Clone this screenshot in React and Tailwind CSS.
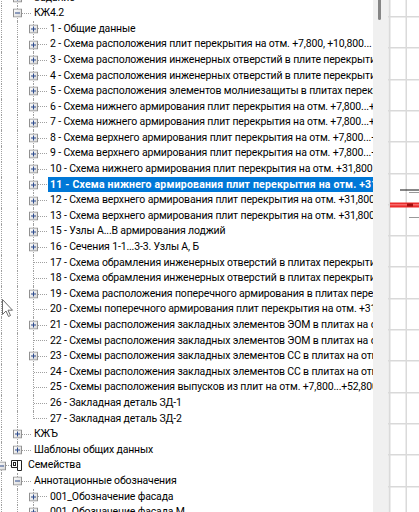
import React from "react";

const LINE = "border-[#a0a0a0]";

function ExpBox({ minus }) {
  return (
    <svg width="9" height="9" viewBox="0 0 9 9" className="block">
      <defs>
        <linearGradient id="bx" x1="0" y1="0" x2="1" y2="1">
          <stop offset="0" stopColor="#ffffff" />
          <stop offset="1" stopColor="#d6d6d6" />
        </linearGradient>
      </defs>
      <rect x="0.5" y="0.5" width="8" height="8" fill="url(#bx)" stroke="#919191" />
      <rect x="2" y="4" width="5" height="1" fill="#2c4a8c" />
      {!minus && <rect x="4" y="2" width="1" height="5" fill="#2c4a8c" />}
    </svg>
  );
}

function FamilyIcon() {
  return (
    <svg width="11" height="11" viewBox="0 0 11 11" className="block">
      <path d="M0.5 0.5 H10.5 V10.5 H6.5 V7.5 H0.5 Z" fill="#fff" stroke="#222" />
      <path d="M6.5 0.5 V7.5" stroke="#222" />
      <rect x="2.5" y="2.5" width="2" height="3" fill="#fff" stroke="#222" />
    </svg>
  );
}

function Guide({ on }) {
  return (
    <div className="w-[16px] self-stretch shrink-0 flex">
      {on && <div className={`ml-[8px] h-full border-l border-dotted ${LINE}`} />}
    </div>
  );
}

function Row({ text, box, next, icon, selected, guides }) {
  return (
    <div className="flex h-[15.6px] items-center whitespace-nowrap">
      {guides.map((g, i) => (
        <Guide key={i} on={g} />
      ))}
      <div className={`relative ${icon ? "w-[18px]" : "w-[23px]"} self-stretch shrink-0 flex items-center`}>
        <div className={`absolute left-[8px] top-0 ${next ? "bottom-0" : "h-1/2"} border-l border-dotted ${LINE}`} />
        <div className={`ml-[9px] flex-1 border-t border-dotted ${LINE} ${icon ? "mr-0" : "mr-[1px]"}`} />
        {box && (
          <div className="absolute left-[4px] top-1/2 -translate-y-1/2">
            <ExpBox minus={box === "minus"} />
          </div>
        )}
      </div>
      {icon && (
        <div className="shrink-0 mr-[4px]">
          <FamilyIcon />
        </div>
      )}
      <div
        className={`h-[15px] flex items-center px-[2px] ${
          selected ? "bg-[#0078d7] text-white font-bold tracking-[0.2px]" : "text-black"
        }`}
      >
        {text}
      </div>
    </div>
  );
}

const L2 = [
  ["1 - Общие данные", true],
  ["2 - Схема расположения плит перекрытия на отм. +7,800, +10,800...", true],
  ["3 - Схема расположения инженерных отверстий в плите перекрытия на отм.", true],
  ["4 - Схема расположения инженерных отверстий в плите перекрытия на отм.", true],
  ["5 - Схема расположения элементов молниезащиты в плитах перекрытия", true],
  ["6 - Схема нижнего армирования плит перекрытия на отм. +7,800...+28,800", true],
  ["7 - Схема нижнего армирования плит перекрытия на отм. +7,800...+28,800", true],
  ["8 - Схема верхнего армирования плит перекрытия на отм. +7,800...+28,800", true],
  ["9 - Схема верхнего армирования плит перекрытия на отм. +7,800...+28,800", true],
  ["10 - Схема нижнего армирования плит перекрытия на отм. +31,800...+52,800", true],
  ["11 - Схема нижнего армирования плит перекрытия на отм. +31,800", true, true],
  ["12 - Схема верхнего армирования плит перекрытия на отм. +31,800", true],
  ["13 - Схема верхнего армирования плит перекрытия на отм. +31,800", true],
  ["15 - Узлы А...В армирования лоджий", true],
  ["16 - Сечения 1-1...3-3. Узлы А, Б", true],
  ["17 - Схема обрамления инженерных отверстий в плитах перекрытия", false],
  ["18 - Схема обрамления инженерных отверстий в плитах перекрытия", false],
  ["19 - Схема расположения поперечного армирования в плитах перекрытия", true],
  ["20 - Схемы поперечного армирования плит перекрытия на отм. +31,800", false],
  ["21 - Схемы расположения закладных элементов ЭОМ в плитах на отм. +7,800", true],
  ["22 - Схемы расположения закладных элементов ЭОМ в плитах на отм. +31,800", false],
  ["23 - Схемы расположения закладных элементов СС в плитах на отм. +7,800", true],
  ["24 - Схемы расположения закладных элементов СС в плитах на отм. +7,800...+52,800", false],
  ["25 - Схемы расположения выпусков из плит на отм. +7,800...+52,800", false],
  ["26 - Закладная деталь ЗД-1", false],
  ["27 - Закладная деталь ЗД-2", false],
];

const rows = [
  { text: "Задание", box: "plus", next: true, guides: [true] },
  { text: "КЖ4.2", box: "minus", next: true, guides: [true] },
  ...L2.map(([t, b, s], i) => ({
    text: t,
    box: b ? "plus" : null,
    next: i < L2.length - 1,
    selected: !!s,
    guides: [true, true],
  })),
  { text: "КЖЪ", box: "plus", next: true, guides: [true] },
  { text: "Шаблоны общих данных", box: "plus", next: false, guides: [true] },
  { text: "Семейства", box: "minus", next: true, icon: true, guides: [] },
  { text: "Аннотационные обозначения", box: "minus", next: true, guides: [true] },
  { text: "001_Обозначение фасада", box: "plus", next: true, guides: [true, true] },
  { text: "001_Обозначение фасада М", box: "plus", next: true, guides: [true, true] },
];

function Drawing() {
  const hs = [];
  for (let i = 0; i < 17; i++) hs.push(17 + i * 31.3);
  return (
    <svg width="31" height="512" className="block">
      <rect width="31" height="512" fill="#fff" />
      {hs.map((y, i) => (
        <rect key={i} x="0" y={Math.round(y) - 1} width="31" height="1.5" fill="#d9d9d9" />
      ))}
      <rect x="0.5" y="0" width="2" height="512" fill="#dadada" />
      <rect x="17.5" y="0" width="1.5" height="512" fill="#dadada" />
      <rect x="12" y="189.5" width="19" height="1" fill="#111" />
      <rect x="21" y="192" width="10" height="1" fill="#9a9a9a" />
      <rect x="21" y="217" width="10" height="1" fill="#9a9a9a" />
      <rect x="2" y="202.5" width="29" height="5" fill="#ec2b2b" />
      <rect x="2" y="204" width="29" height="1.5" fill="#f56a6a" />
      <rect x="19" y="203.5" width="6" height="3" fill="#a01010" />
    </svg>
  );
}

export default function App() {
  return (
    <div className="w-[419px] h-[512px] overflow-hidden flex bg-white relative font-['Roboto',sans-serif] text-[10.5px] tracking-[-0.15px] leading-none">
      <div className="w-[373px] h-full overflow-hidden shrink-0">
        <div className="mt-[-10px] ml-[-7px]">
          {rows.map((r, i) => (
            <Row key={i} {...r} />
          ))}
        </div>
      </div>
      <div className="w-[15px] h-full bg-[#f0f0f0] shrink-0">
        <div className="ml-[5px] w-[3px] h-[20px] bg-[#858585] rounded-b-[2px]" />
      </div>
      <Drawing />
      <svg
        width="12"
        height="19"
        viewBox="0 0 12 19"
        className="absolute left-[2px] top-[299px]"
      >
        <path
          d="M0.5 0.5 L0.5 15.5 L4 12 L6.5 17.5 L8.5 16.5 L6 11.2 L10.5 11.2 Z"
          fill="#fff"
          stroke="#6b6b6b"
        />
      </svg>
    </div>
  );
}
